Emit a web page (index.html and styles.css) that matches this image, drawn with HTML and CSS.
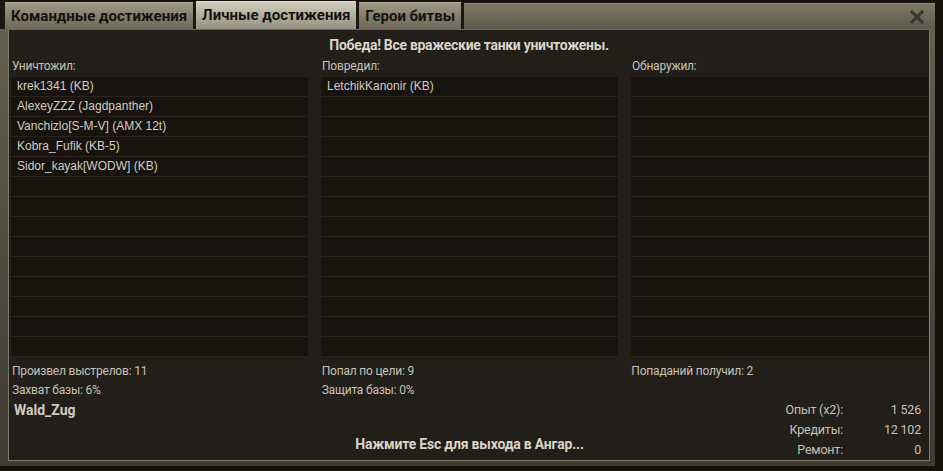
FILE: index.html
```html
<!DOCTYPE html>
<html lang="ru">
<head>
  <meta charset="UTF-8" />
  <title>Личные достижения</title>
  <link rel="stylesheet" href="styles.css">
</head>
<body>
  <div class="window">
    <div class="tabbar">
      <div class="tab">Командные достижения</div>
      <div class="tab active">Личные достижения</div>
      <div class="tab">Герои битвы</div>
      <div class="tab-fill">
        <svg class="close" width="14" height="14" viewBox="0 0 14 14">
          <path d="M2 2 L12 12 M12 2 L2 12" stroke="#3a382f" stroke-width="3.2" stroke-linecap="square" />
        </svg>
      </div>
    </div>

    <div class="panel">
      <div class="title">Победа! Все вражеские танки уничтожены.</div>

      <div class="columns">
        <div class="col">
          <div class="col-head">Уничтожил:</div>
          <ul class="list" id="list-killed"></ul>
        </div>
        <div class="col">
          <div class="col-head">Повредил:</div>
          <ul class="list" id="list-damaged"></ul>
        </div>
        <div class="col">
          <div class="col-head">Обнаружил:</div>
          <ul class="list" id="list-spotted"></ul>
        </div>
      </div>

      <div class="stats">
        <div class="stat-col">
          <div>Произвел выстрелов: 11</div>
          <div>Захват базы: 6%</div>
        </div>
        <div class="stat-col">
          <div>Попал по цели: 9</div>
          <div>Защита базы: 0%</div>
        </div>
        <div class="stat-col">
          <div>Попаданий получил: 2</div>
        </div>
      </div>

      <div class="footer">
        <div class="player">Wald_Zug</div>
        <div class="exit">Нажмите Esc для выхода в Ангар...</div>
        <div class="totals">
          <div class="total-row"><span class="t-label">Опыт (x2):</span><span class="t-value">1 526</span></div>
          <div class="total-row"><span class="t-label">Кредиты:</span><span class="t-value">12 102</span></div>
          <div class="total-row"><span class="t-label">Ремонт:</span><span class="t-value">0</span></div>
        </div>
      </div>
    </div>
  </div>

  <script>
    const ROWS = 14;
    const data = {
      'list-killed': ['krek1341 (KB)', 'AlexeyZZZ (Jagdpanther)', 'Vanchizlo[S-M-V] (AMX 12t)', 'Kobra_Fufik (KB-5)', 'Sidor_kayak[WODW] (KB)'],
      'list-damaged': ['LetchikKanonir (KB)'],
      'list-spotted': []
    };

    Object.keys(data).forEach(id => {
      const list = document.getElementById(id);
      for (let i = 0; i < ROWS; i++) {
        const li = document.createElement('li');
        li.textContent = data[id][i] || '';
        list.appendChild(li);
      }
    });
  </script>
</body>
</html>
```

FILE: styles.css
```css
* {
  margin: 0;
  padding: 0;
  box-sizing: border-box;
}
body {
  background: #15120e;
  width: 943px;
  height: 471px;
  overflow: hidden;
  font-family: 'Roboto', sans-serif;
  color: #c6c2b6;
}
.window {
  width: 935px;
  height: 465px;
  margin-top: 1px;
  background: linear-gradient(to bottom, #66624f, #4c493e 60%, #3e3b31);
  padding: 0 5px 5px 8px;
  display: flex;
  flex-direction: column;
}

/* tabs */
.tabbar {
  display: flex;
  height: 28px;
  margin-left: -8px;
  margin-right: -5px;
  padding-left: 5px;
  background: #1b1814;
}
.tab {
  height: 27px;
  margin-top: 1px;
  margin-right: 3px;
  padding: 0 6px;
  font-weight: bold;
  font-size: 15px;
  line-height: 27px;
  color: #15130d;
  background: linear-gradient(to bottom, #9e9a87, #807c6a 55%, #6e6a5a);
  border-top: 1px solid #b0ac98;
}
.tab.active {
  height: 28px;
  margin-top: 0;
  background: linear-gradient(to bottom, #d2cebe, #b3af9f 50%, #949080);
  border-top: 1px solid #e2decf;
}
.tab-fill {
  flex: 1;
  margin-top: 2px;
  background: linear-gradient(to bottom, #7e7a66, #6a6655 60%, #5c5949);
  border-top: 1px solid #928e79;
  display: flex;
  justify-content: flex-end;
  align-items: center;
  padding-right: 11px;
}

/* inner panel */
.panel {
  flex: 1;
  background: #221e19;
  border: 1px solid #7d796a;
  border-top-color: #6a6658;
  padding: 7px 1px 0 1px;
  display: flex;
  flex-direction: column;
}
.title {
  text-align: center;
  font-weight: bold;
  font-size: 14px;
  letter-spacing: -0.3px;
  line-height: 16px;
  color: #d9d5c9;
}
.columns {
  display: flex;
  gap: 13px;
  margin-top: 5px;
}
.col {
  width: 297px;
}
.col:first-child {
  margin-left: 1px;
}
.col-head {
  font-size: 12px;
  letter-spacing: -0.2px;
  line-height: 16px;
  padding-left: 1px;
  margin-bottom: 3px;
}
.list {
  list-style: none;
  background: #17130f;
}
.list li {
  height: 20px;
  line-height: 19px;
  padding-left: 6px;
  border-bottom: 1px solid #2c231d;
  font-family: 'Liberation Sans', 'Arial', sans-serif;
  font-size: 12px;
  color: #d2cec2;
}

/* stats */
.stats {
  display: flex;
  gap: 13px;
  margin-top: 5px;
  padding-left: 2px;
  height: 38px;
  font-size: 12px;
  letter-spacing: -0.2px;
  line-height: 19px;
}
.stat-col {
  width: 297px;
}

.footer {
  flex: 1;
  display: flex;
  align-items: flex-start;
  padding-left: 4px;
  padding-right: 7px;
}
.player {
  width: 300px;
  padding-top: 1px;
  font-weight: bold;
  font-size: 14px;
  line-height: 18px;
  color: #d0ccc0;
}
.exit {
  flex: 1;
  align-self: flex-end;
  margin-bottom: 8px;
  text-align: center;
  font-weight: bold;
  font-size: 14px;
  letter-spacing: -0.2px;
  line-height: 16px;
  color: #d9d5c9;
  padding-right: 16px;
}
.totals {
  width: 280px;
  font-size: 12.5px;
  letter-spacing: -0.2px;
  line-height: 20px;
}
.total-row {
  display: flex;
  justify-content: flex-end;
}
.t-label {
  text-align: right;
  margin-right: -2px;
}
.t-value {
  width: 80px;
  text-align: right;
}
```
